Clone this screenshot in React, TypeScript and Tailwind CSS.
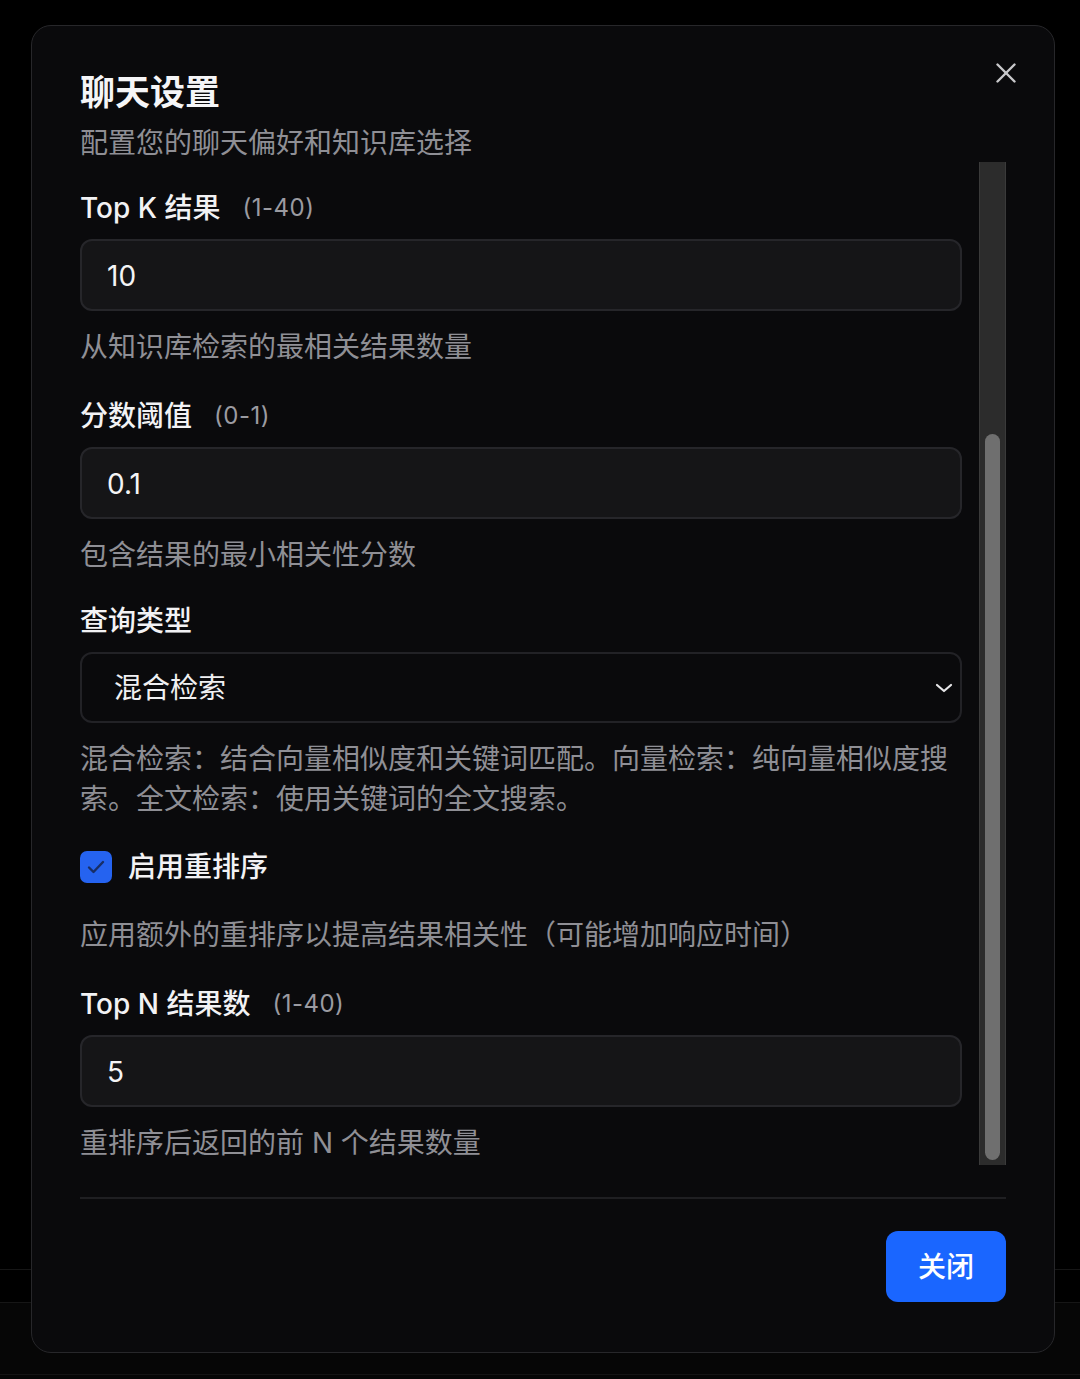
import React from "react";

const font = "font-['Inter','Noto_Sans_CJK_SC',sans-serif]";

function Field({ label, hint, value }: { label: string; hint?: string; value: string }) {
  return (
    <div className="flex flex-col">
      <div className="flex items-center h-[40px] gap-[22px]">
        <span className="text-[28px] font-medium text-[#f2f2f4]">{label}</span>
        {hint && <span className="text-[24px] text-[#9b9ba1] tracking-[0.5px]">{hint}</span>}
      </div>
      <div className="mt-[11px] h-[72px] rounded-[12px] border-2 border-[#26262a] bg-[#151517] flex items-center px-[25px]">
        <span className="text-[28px] text-[#f4f4f5] translate-y-[1px]">{value}</span>
      </div>
    </div>
  );
}

function Desc({ children }: { children: React.ReactNode }) {
  return <p className="mt-[16px] text-[28px] leading-[40px] text-[#8f8f95]">{children}</p>;
}

export default function App() {
  return (
    <div className={`relative w-[1080px] h-[1379px] overflow-hidden bg-black ${font}`}>
      {/* page behind the modal */}
      <div className="flex flex-col h-full">
        <div className="flex-1" />
        <div className="h-[34px] border-y border-[#161616]" />
        <div className="h-[72px] bg-[#060606] border-b border-[#141414]" />
        <div className="h-[4px] bg-[#060606]" />
      </div>

      {/* modal */}
      <div className="absolute left-[31px] top-[25px] w-[1024px] h-[1328px] rounded-[20px] border border-[#27272a] bg-[#0a0a0c] flex flex-col px-[48px] pt-[44px] pb-[48px]">
        <button className="absolute right-[38px] top-[37px] w-[20px] h-[20px] text-[#c9c9cc]">
          <svg width="20" height="20" viewBox="0 0 20 20" fill="none" stroke="currentColor" strokeWidth="2.4" strokeLinecap="round">
            <line x1="1.5" y1="1.5" x2="18.5" y2="18.5" />
            <line x1="18.5" y1="1.5" x2="1.5" y2="18.5" />
          </svg>
        </button>

        <h2 className="text-[35px] leading-[44px] font-semibold text-[#f5f5f7]">聊天设置</h2>
        <p className="mt-[8px] text-[28px] leading-[40px] text-[#8f8f95] translate-y-[1px]">配置您的聊天偏好和知识库选择</p>

        {/* scroll area */}
        <div className="flex h-[1003px] gap-[17px]">
          <div className="flex-1 flex flex-col pt-[26px]">
            <Field label="Top K 结果" hint="(1-40)" value="10" />
            <Desc>从知识库检索的最相关结果数量</Desc>

            <div className="mt-[29px]">
              <Field label="分数阈值" hint="(0-1)" value="0.1" />
            </div>
            <Desc>包含结果的最小相关性分数</Desc>

            <div className="mt-[26px] flex flex-col">
              <div className="flex items-center h-[40px]">
                <span className="text-[28px] font-medium text-[#f2f2f4]">查询类型</span>
              </div>
              <div className="mt-[11px] h-[71px] rounded-[12px] border-2 border-[#222226] bg-[#0a0a0c] flex items-center justify-between pl-[32px] pr-[6px]">
                <span className="text-[28px] text-[#f0f0f2]">混合检索</span>
                <svg width="20" height="12" viewBox="0 0 20 12" fill="none" stroke="#e6e6e8" strokeWidth="2.2" strokeLinecap="round" strokeLinejoin="round">
                  <polyline points="3,3 10,9 17,3" />
                </svg>
              </div>
            </div>
            <Desc>混合检索：结合向量相似度和关键词匹配。向量检索：纯向量相似度搜索。全文检索：使用关键词的全文搜索。</Desc>

            <div className="mt-[28px] flex items-center h-[40px] gap-[16px]">
              <span className="w-[32px] h-[32px] rounded-[7px] bg-[#2563f0] flex items-center justify-center">
                <svg width="20" height="16" viewBox="0 0 20 16" fill="none" stroke="#182e66" strokeWidth="2.4" strokeLinecap="round" strokeLinejoin="round">
                  <polyline points="3,8.5 7.5,13 17,3" />
                </svg>
              </span>
              <span className="text-[28px] font-medium text-[#f2f2f4]">启用重排序</span>
            </div>
            <p className="mt-[28px] text-[28px] leading-[40px] text-[#8f8f95]">应用额外的重排序以提高结果相关性（可能增加响应时间）</p>

            <div className="mt-[29px]">
              <Field label="Top N 结果数" hint="(1-40)" value="5" />
            </div>
            <Desc>重排序后返回的前 N 个结果数量</Desc>
          </div>

          {/* scrollbar */}
          <div className="w-[27px] bg-[#2c2c2c] border-x border-[#3a3a3a] flex flex-col pt-[272px] pb-[5px] items-center">
            <div className="w-[15px] flex-1 rounded-full bg-[#6f6f6f]" />
          </div>
        </div>

        <div className="mt-[32px] h-[2px] bg-[#1f1f22]" />

        <div className="mt-[32px] flex justify-end">
          <button className="w-[120px] h-[71px] rounded-[12px] bg-[#1a66ff] text-white text-[28px] font-medium">关闭</button>
        </div>
      </div>
    </div>
  );
}
